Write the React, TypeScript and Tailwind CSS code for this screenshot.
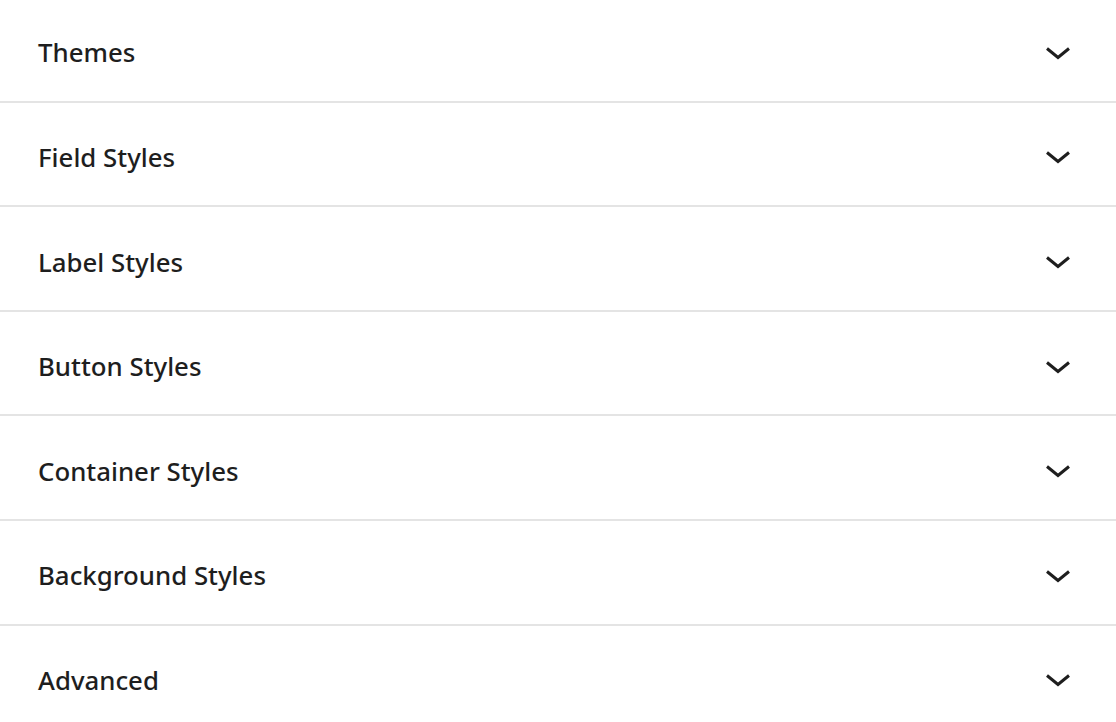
import React from "react";

const items = [
  "Themes",
  "Field Styles",
  "Label Styles",
  "Button Styles",
  "Container Styles",
  "Background Styles",
  "Advanced",
];

function Chevron() {
  return (
    <svg width="26" height="14" viewBox="0 0 26 14" fill="none">
      <polyline
        points="2,2.5 13,11.5 24,2.5"
        stroke="#1e1e1e"
        strokeWidth="3"
        fill="none"
      />
    </svg>
  );
}

export default function App() {
  return (
    <div
      className="w-[1116px] h-[722px] overflow-hidden bg-white"
      style={{ fontFamily: '"Noto Sans", "Open Sans", sans-serif' }}
    >
      <div className="-mt-[2px]">
        {items.map((t) => (
          <div
            key={t}
            className="h-[104.6px] flex items-center justify-between pt-[7px] pl-[38px] pr-[45px] border-b-2 border-[#e4e4e4] box-border"
          >
            <span className="text-[25.8px] font-medium text-[#1e1e1e]">
              {t}
            </span>
            <Chevron />
          </div>
        ))}
      </div>
    </div>
  );
}
